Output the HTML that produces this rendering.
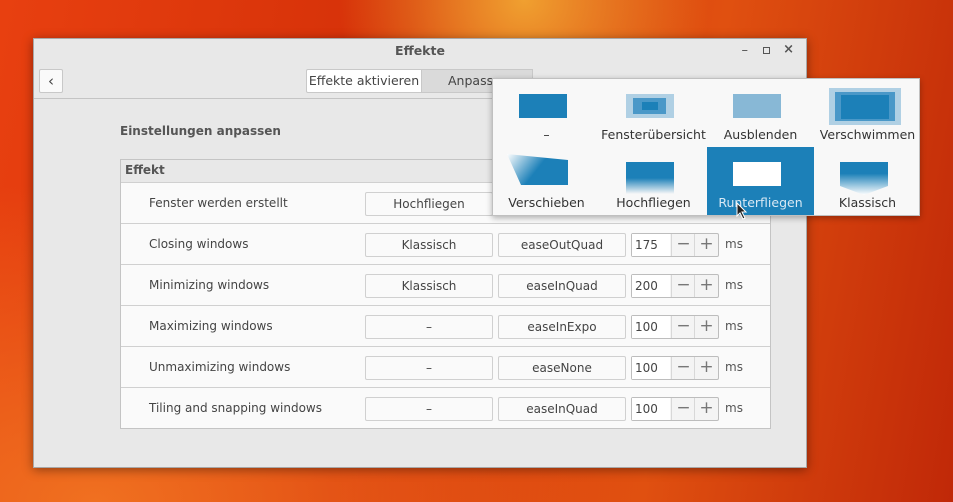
<!DOCTYPE html>
<html><head><meta charset="utf-8"><style>
body{margin:0;width:953px;height:502px;overflow:hidden;font-family:"DejaVu Sans","Liberation Sans",sans-serif;font-size:12px;color:#444;
background:radial-gradient(ellipse at 55% 0%,#f0a030 0%,transparent 25%),radial-gradient(ellipse at 10% 100%,#f07020 0%,transparent 45%),linear-gradient(100deg,#e84010,#d43008 40%,#e05010 70%,#c02808);position:relative}
.abs{position:absolute}
.win{left:33px;top:38px;width:772px;height:428px;background:#e8e8e8;border:1px solid #a8a8a8;box-shadow:0 2px 10px rgba(0,0,0,.4)}
.title{left:0;top:0;width:772px;text-align:center;top:4px;font-weight:bold;font-size:12.5px;color:#555}
.btn{background:#fafafa;border:1px solid #c8c8c8;border-radius:2px}
.table{left:86px;top:120px;width:649px;height:268px;background:#fafafa;border:1px solid #c4c4c4}
.row{position:absolute;left:0;width:649px;height:40px;border-top:1px solid #d0d0d0}
.lbl{position:absolute;left:28px;top:13px}
.cb{position:absolute;top:9px;height:22px;line-height:22px;text-align:center;background:#fafafa;border:1px solid #d0d0d0;border-radius:2px;color:#444}
.spin{position:absolute;left:510px;top:9px;width:86px;height:22px;border:1px solid #bdbdbd;border-radius:2px;background:#f4f4f4}
.spin .v{position:absolute;left:0;top:0;width:38px;height:22px;background:#fff;line-height:22px;padding-left:3px;box-sizing:border-box}
.spin .m,.spin .p{position:absolute;top:0;width:23px;height:22px;line-height:21px;text-align:center;border-left:1px solid #d8d8d8;font-size:17px;color:#777}
.ms{position:absolute;left:604px;top:13px;color:#555}
.pop{left:492px;top:78px;width:426px;height:136px;background:#f8f8f8;border:1px solid #c0c0c0;box-shadow:0 2px 6px rgba(0,0,0,.3)}
.cell{position:absolute;width:107px;height:68px;text-align:center}
.cell span{position:absolute;left:0;right:0;top:48px;font-size:12.5px;color:#333}
.ic{position:absolute;left:26px;top:15px;width:48px;height:24px;background:#1c80b8}
</style></head><body>
<div class="abs win">
<div class="abs title">Effekte</div>
<div class="abs" style="right:58px;top:4px;color:#555;font-size:13px">–</div>
<div class="abs" style="right:36px;top:8px;width:5px;height:5px;border:1.5px solid #555"></div>
<div class="abs" style="right:12px;top:3px;color:#555;font-size:13px;font-weight:bold">×</div>
<div class="abs btn" style="left:5px;top:30px;width:22px;height:22px;line-height:22px;text-align:center;font-size:15px;color:#444">‹</div>
<div class="abs" style="left:272px;top:30px;width:114px;height:22px;line-height:22px;background:#fff;border:1px solid #c8c8c8;border-radius:2px 0 0 2px;text-align:center;font-size:12.5px">Effekte aktivieren</div>
<div class="abs" style="left:387px;top:30px;width:112px;box-sizing:border-box;height:24px;line-height:22px;background:#dadada;border:1px solid #c8c8c8;padding-left:26px;font-size:12.5px">Anpassen</div>
<div class="abs" style="left:0;top:59px;width:772px;border-top:1px solid #c4c4c4"></div>
<div class="abs" style="left:86px;top:85px;font-weight:bold;color:#555">Einstellungen anpassen</div>
<div class="abs table">
<div class="abs" style="left:0;top:0;width:649px;height:22px;background:#e8e8e8"><b style="position:absolute;left:4px;top:3px;color:#555">Effekt</b></div>
<div class="row" style="top:22px"><div class="lbl">Fenster werden erstellt</div><div class="cb" style="left:244px;width:126px">Hochfliegen</div></div>
<div class="row" style="top:63px"><div class="lbl">Closing windows</div><div class="cb" style="left:244px;width:126px">Klassisch</div><div class="cb" style="left:377px;width:126px">easeOutQuad</div><div class="spin"><div class="v">175</div><div class="m" style="left:39px">−</div><div class="p" style="left:62px">+</div></div><div class="ms">ms</div></div>
<div class="row" style="top:104px"><div class="lbl">Minimizing windows</div><div class="cb" style="left:244px;width:126px">Klassisch</div><div class="cb" style="left:377px;width:126px">easeInQuad</div><div class="spin"><div class="v">200</div><div class="m" style="left:39px">−</div><div class="p" style="left:62px">+</div></div><div class="ms">ms</div></div>
<div class="row" style="top:145px"><div class="lbl">Maximizing windows</div><div class="cb" style="left:244px;width:126px">–</div><div class="cb" style="left:377px;width:126px">easeInExpo</div><div class="spin"><div class="v">100</div><div class="m" style="left:39px">−</div><div class="p" style="left:62px">+</div></div><div class="ms">ms</div></div>
<div class="row" style="top:186px"><div class="lbl">Unmaximizing windows</div><div class="cb" style="left:244px;width:126px">–</div><div class="cb" style="left:377px;width:126px">easeNone</div><div class="spin"><div class="v">100</div><div class="m" style="left:39px">−</div><div class="p" style="left:62px">+</div></div><div class="ms">ms</div></div>
<div class="row" style="top:227px"><div class="lbl">Tiling and snapping windows</div><div class="cb" style="left:244px;width:126px">–</div><div class="cb" style="left:377px;width:126px">easeInQuad</div><div class="spin"><div class="v">100</div><div class="m" style="left:39px">−</div><div class="p" style="left:62px">+</div></div><div class="ms">ms</div></div>
</div>
</div>
<div class="abs pop">
<div class="cell" style="left:0;top:0"><div class="ic"></div><span>–</span></div>
<div class="cell" style="left:107px;top:0"><div class="ic" style="background:#b0d0e4"></div><div class="abs" style="left:33px;top:19px;width:33px;height:16px;background:#4a98c8"></div><div class="abs" style="left:42px;top:23px;width:16px;height:8px;background:#1c80b8"></div><span>Fensterübersicht</span></div>
<div class="cell" style="left:214px;top:0"><div class="ic" style="background:#88b8d6"></div><span>Ausblenden</span></div>
<div class="cell" style="left:321px;top:0"><div class="abs" style="left:15px;top:9px;width:72px;height:37px;background:#b0d0e4"></div><div class="abs" style="left:21px;top:13px;width:60px;height:29px;background:#4a98c8"></div><div class="abs" style="left:27px;top:16px;width:48px;height:24px;background:#1c80b8"></div><span>Verschwimmen</span></div>
<div class="cell" style="left:0;top:68px"><svg class="abs" style="left:14px;top:7px" width="62" height="32"><defs><linearGradient id="g" x1="0" y1="0" x2="1" y2="0.4"><stop offset="0" stop-color="#fff"/><stop offset=".6" stop-color="#1c80b8"/></linearGradient></defs><polygon points="0,0 61,6 61,31 14,31" fill="url(#g)"/></svg><span>Verschieben</span></div>
<div class="cell" style="left:107px;top:68px"><div class="ic" style="top:15px;height:32px;background:linear-gradient(#1c80b8 50%,#f8f8f8)"></div><span>Hochfliegen</span></div>
<div class="cell" style="left:214px;top:68px;background:#1c80b8"><div class="ic" style="background:#fff"></div><span style="color:#d8e8f4">Runterfliegen</span></div>
<div class="cell" style="left:321px;top:68px"><svg class="abs" style="left:26px;top:15px" width="48" height="34"><defs><linearGradient id="h" x1="0" y1="0" x2="0" y2="1"><stop offset=".35" stop-color="#1c80b8"/><stop offset="1" stop-color="#fff"/></linearGradient></defs><polygon points="0,0 48,0 48,24 24,33 0,24" fill="url(#h)"/></svg><span>Klassisch</span></div>
</div>
<svg class="abs" style="left:736px;top:202px" width="12" height="18"><polygon points="1,1 1,14 4,11 7,17 9,16 6,10 10,10" fill="#222" stroke="#fff" stroke-width="1"/></svg>
</body></html>
